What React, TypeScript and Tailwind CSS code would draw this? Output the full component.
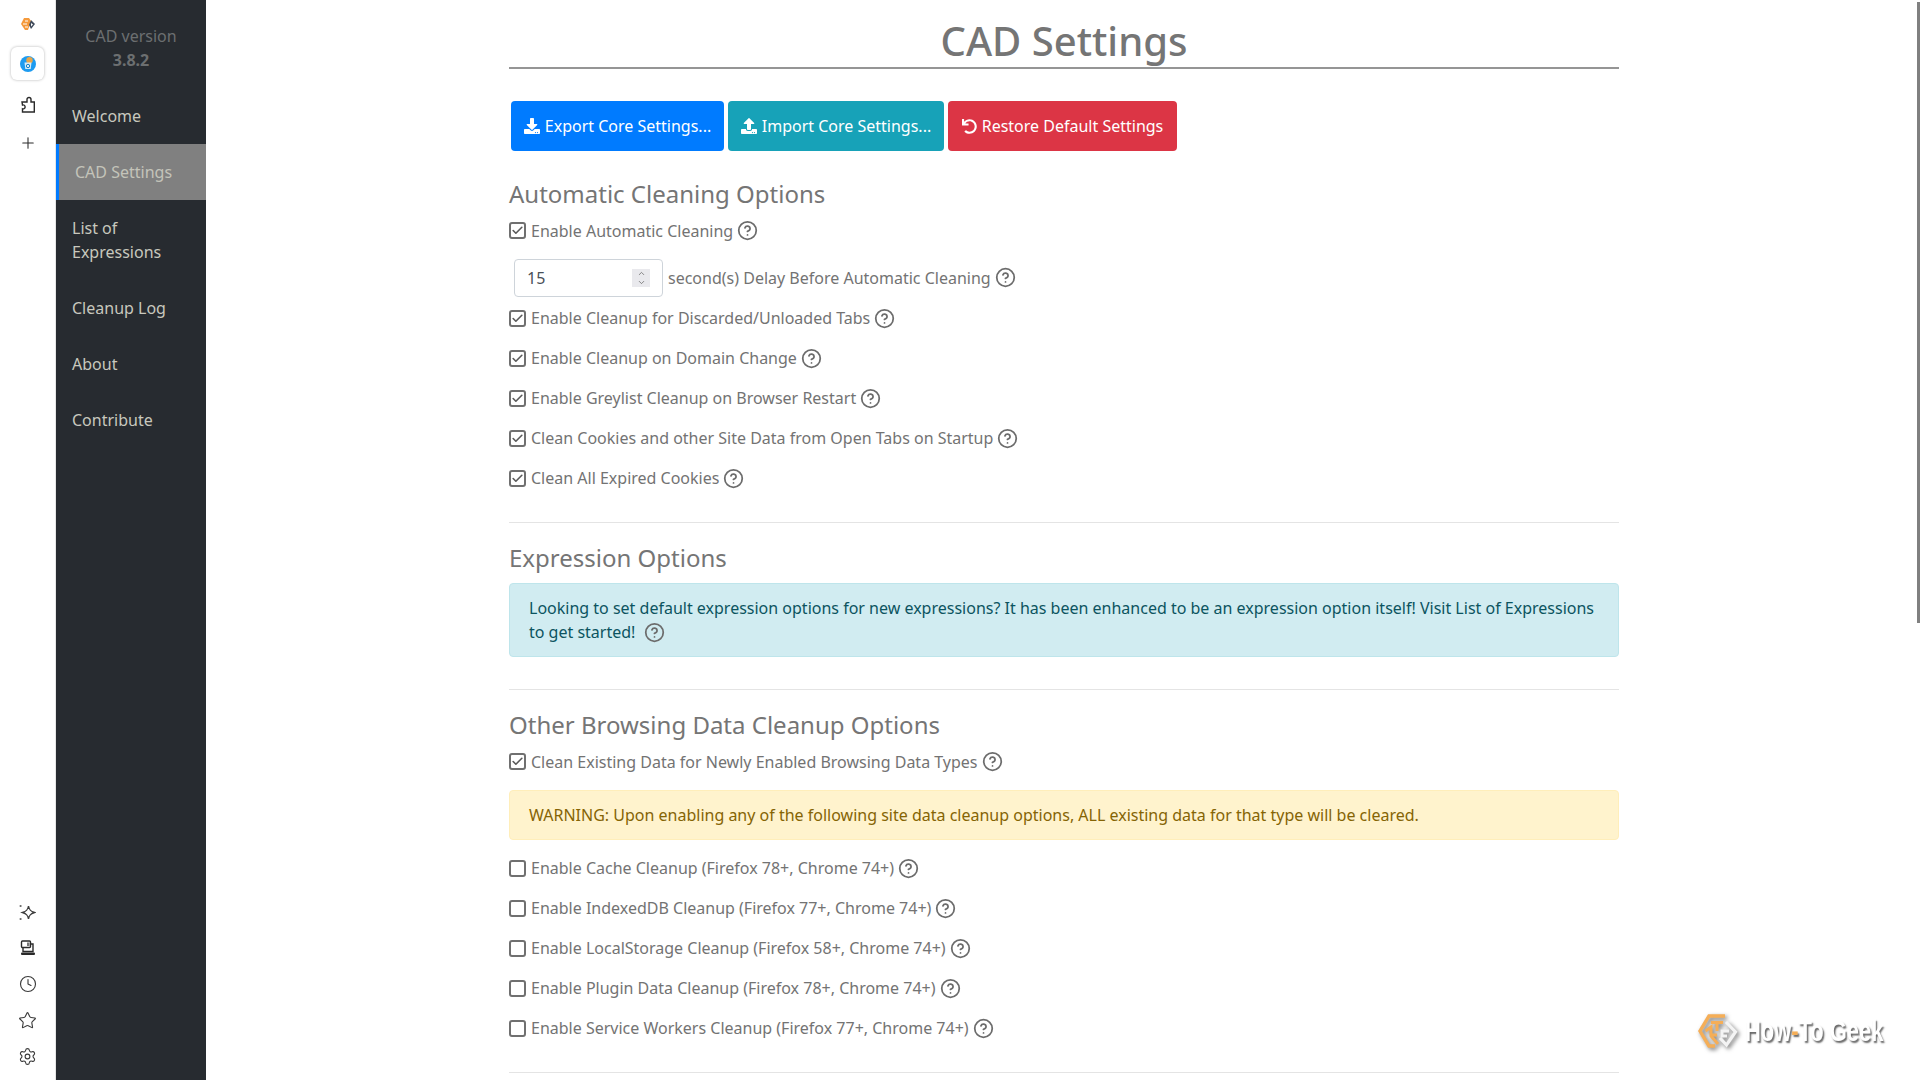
import React from "react";
import { Clock, Plus, Settings, Star, CircleHelp, Check, ChevronUp, ChevronDown } from "lucide-react";
import { FaDownload, FaUpload, FaUndo } from "react-icons/fa";

const font = { fontFamily: '"Noto Sans", sans-serif' };

function Help({ className = "ml-[4px]" }: { className?: string }) {
  return <CircleHelp className={`${className} w-[21px] h-[21px] text-[#6c6c6c] shrink-0`} strokeWidth={2} />;
}

function CheckRow({ label, checked, className = "h-[40px]" }: { label: string; checked?: boolean; className?: string }) {
  return (
    <div className={`flex items-center ${className}`}>
      <span className="w-[17px] h-[17px] border-2 border-[#707070] rounded-[3px] flex items-center justify-center shrink-0">
        {checked && <Check className="w-[13px] h-[13px] text-[#5a5a5a]" strokeWidth={3} />}
      </span>
      <span className="ml-[5px] text-[16px] text-[#737373]">{label}</span>
      <Help />
    </div>
  );
}

function Logo() {
  return (
    <svg width="40" height="34" viewBox="0 0 40 34" fill="none" className="drop-shadow-[2px_2px_2px_rgba(0,0,0,0.55)]">
      <path d="M27 2H11L2 17L11 32H17" stroke="#f5ae57" strokeWidth="3.4" />
      <path d="M13 8.5H25M19 8.5V17M7.5 17L13 13V22L20 30" stroke="#f5ae57" strokeWidth="3" />
      <path d="M13 21H19" stroke="#f5ae57" strokeWidth="3" />
      <path d="M28 8L37.5 18L28.5 31L22 24" stroke="#f4f4f4" strokeWidth="3.2" />
      <path d="M31 17H24V22H29" stroke="#f4f4f4" strokeWidth="2.8" />
    </svg>
  );
}

function SmallLogo() {
  return (
    <svg width="16" height="14" viewBox="0 0 16 14">
      <path d="M4 1H9L11 4L8 13H5L1 7Z" fill="#f59a3c" />
      <path d="M5 4H8M3 7H7M5 10H8" stroke="#fff" strokeWidth="1" />
      <path d="M11 3L15 7L11 12L9 8Z" fill="#3f4a5a" />
      <path d="M11 6L13 7.5L11 9.5Z" fill="#fff" />
    </svg>
  );
}

function CadIcon() {
  return (
    <svg width="16" height="16" viewBox="0 0 16 16">
      <circle cx="8" cy="8" r="8" fill="#1d9bf0" />
      <circle cx="9.5" cy="4.2" r="3.2" fill="#e8a64a" />
      <path d="M4.5 6.5H11.5L10.7 13H5.3Z" fill="#d9edf7" />
      <circle cx="8" cy="10" r="1.7" fill="none" stroke="#1783c9" strokeWidth="1" />
    </svg>
  );
}

function Slot({ children }: { children: React.ReactNode }) {
  return <div className="h-[36px] flex items-center justify-center">{children}</div>;
}

function Rail() {
  return (
    <aside className="w-[56px] shrink-0 flex flex-col items-center bg-white border-r border-[#e6e6e6] h-full">
      <div className="h-[47px] flex items-center justify-center"><SmallLogo /></div>
      <div className="w-[33px] h-[33px] rounded-[6px] bg-white shadow-[0_0_3px_rgba(0,0,0,0.3)] flex items-center justify-center"><CadIcon /></div>
      <svg width="16" height="17" viewBox="0 0 16 17" fill="none" stroke="#2a2a2a" strokeWidth="1.4" className="mt-[16px]">
        <path d="M2 6H7V3.5a2 2 0 1 1 4 0V6H14.3V16H2.5V12.8a2 2 0 1 0 0-3.8Z" />
      </svg>
      <Plus className="w-[18px] h-[18px] mt-[21px] text-[#2a2a2a]" strokeWidth={1.4} />
      <div className="flex-1" />
      <div className="flex flex-col pb-[6px]">
        <Slot>
          <svg width="17" height="17" viewBox="0 0 17 17" fill="none" stroke="#3b3b3b" strokeWidth="1.4">
            <path d="M9.5 2C10.1 5.8 11.3 7.2 15.5 8.5C11.3 9.8 10.1 11.2 9.5 15C8.9 11.2 7.7 9.8 3.5 8.5C7.7 7.2 8.9 5.8 9.5 2Z" />
            <circle cx="1.6" cy="2" r="1.1" fill="#666" stroke="none" />
            <circle cx="1.6" cy="15" r="1.1" fill="#666" stroke="none" />
          </svg>
        </Slot>
        <Slot>
          <svg width="16" height="16" viewBox="0 0 16 16" fill="none" stroke="#2a2a2a" strokeWidth="1.4">
            <rect x="1.5" y="1" width="9" height="6.5" rx="1" />
            <rect x="7" y="2.5" width="2.5" height="3.5" fill="#777" stroke="none" />
            <path d="M3 8v3.5h10V4h-2" />
            <rect x="1" y="12.5" width="14" height="2.5" rx="1" fill="#2a2a2a" stroke="none" />
          </svg>
        </Slot>
        <Slot><Clock className="w-[18px] h-[18px] text-[#3b3b3b]" strokeWidth={1.5} /></Slot>
        <Slot><Star className="w-[19px] h-[19px] text-[#3b3b3b]" strokeWidth={1.4} /></Slot>
        <Slot><Settings className="w-[19px] h-[19px] text-[#3b3b3b]" strokeWidth={1.4} /></Slot>
      </div>
    </aside>
  );
}

function NavItem({ children, active }: { children: React.ReactNode; active?: boolean }) {
  if (active) {
    return <div className="h-[56px] flex items-center pl-[16px] border-l-[3px] border-[#007bff] bg-[#808080] text-[#c4c4ba] text-[16px]">{children}</div>;
  }
  return <div className="px-[16px] py-[16px] text-[#c8c8be] text-[16px] leading-[24px]">{children}</div>;
}

function Nav() {
  return (
    <nav className="w-[150px] shrink-0 bg-[#272b30] h-full flex flex-col">
      <div className="h-[88px] pt-[24px] text-center text-[16px] leading-[24px] text-[#6c6f70]">
        <div>CAD version</div>
        <div className="font-bold">3.8.2</div>
      </div>
      <NavItem>Welcome</NavItem>
      <NavItem active>CAD Settings</NavItem>
      <NavItem>List of Expressions</NavItem>
      <NavItem>Cleanup Log</NavItem>
      <NavItem>About</NavItem>
      <NavItem>Contribute</NavItem>
    </nav>
  );
}

function Btn({ color, icon, label, width }: { color: string; icon: React.ReactNode; label: string; width: string }) {
  return (
    <div className={`${color} ${width} h-[50px] rounded-[4px] text-white text-[16px] flex items-center justify-center gap-[5px]`}>
      {icon}
      <span>{label}</span>
    </div>
  );
}

function Section({ children }: { children: React.ReactNode }) {
  return <h4 className="text-[24px] leading-[29px] text-[#757575]">{children}</h4>;
}

function Divider({ className }: { className: string }) {
  return <hr className={`border-0 border-t border-[#e4e4e4] ${className}`} />;
}

export default function App() {
  return (
    <div style={font} className="flex w-[1920px] h-[1080px] overflow-hidden bg-white relative">
      <Rail />
      <Nav />
      <main className="flex-1 pl-[303px] pr-[298px] text-[#737373] min-w-0">
        <div className="w-[1110px]">
          <h1 className="text-[40px] leading-[48px] text-center text-[#757575] font-medium h-[69px] pt-[17px] border-b-2 border-[#959595]">CAD Settings</h1>
          <div className="flex gap-[4px] pl-[2px] mt-[32px]">
            <Btn color="bg-[#007bff]" width="w-[213px]" label="Export Core Settings..." icon={<FaDownload className="w-[16px] h-[16px]" />} />
            <Btn color="bg-[#17a2b8]" width="w-[216px]" label="Import Core Settings..." icon={<FaUpload className="w-[16px] h-[16px]" />} />
            <Btn color="bg-[#dc3545]" width="w-[229px]" label="Restore Default Settings" icon={<FaUndo className="w-[15px] h-[15px]" />} />
          </div>
          <div className="mt-[28px]"><Section>Automatic Cleaning Options</Section></div>
          <CheckRow checked label="Enable Automatic Cleaning" className="h-[45px]" />
          <div className="flex items-center h-[41px] ml-[5px] mt-[4px]">
            <div className="w-[149px] h-[38px] border border-[#ced4da] rounded-[4px] flex items-center pl-[12px] pr-[12px] text-[16px] text-[#495057]">
              <span className="flex-1">15</span>
              <span className="w-[18px] h-[18px] bg-[#e9e9ed] flex flex-col items-center justify-center">
                <ChevronUp className="w-[11px] h-[9px] text-[#666]" />
                <ChevronDown className="w-[11px] h-[9px] text-[#666]" />
              </span>
            </div>
            <span className="ml-[5px] text-[16px]">second(s) Delay Before Automatic Cleaning</span>
            <Help />
          </div>
          <CheckRow checked label="Enable Cleanup for Discarded/Unloaded Tabs" />
          <CheckRow checked label="Enable Cleanup on Domain Change" />
          <CheckRow checked label="Enable Greylist Cleanup on Browser Restart" />
          <CheckRow checked label="Clean Cookies and other Site Data from Open Tabs on Startup" />
          <CheckRow checked label="Clean All Expired Cookies" />
          <Divider className="mt-[24px] mb-[20px]" />
          <Section>Expression Options</Section>
          <div className="mt-[11px] h-[74px] border border-[#bee5eb] bg-[#d1ecf1] rounded-[4px] px-[19px] pt-[12px] text-[16px] leading-[24px] text-[#0c5460]">
            <div>Looking to set default expression options for new expressions? It has been enhanced to be an expression option itself! Visit List of Expressions</div>
            <div className="flex items-center">to get started!<Help className="ml-[9px]" /></div>
          </div>
          <Divider className="mt-[32px] mb-[20px]" />
          <Section>Other Browsing Data Cleanup Options</Section>
          <CheckRow checked label="Clean Existing Data for Newly Enabled Browsing Data Types" className="h-[45px]" />
          <div className="mt-[6px] h-[50px] border border-[#ffeeba] bg-[#fff3cd] rounded-[4px] px-[19px] flex items-center text-[16px] text-[#856404]">
            WARNING: Upon enabling any of the following site data cleanup options, ALL existing data for that type will be cleared.
          </div>
          <div className="mt-[8px]">
            <CheckRow label="Enable Cache Cleanup (Firefox 78+, Chrome 74+)" />
            <CheckRow label="Enable IndexedDB Cleanup (Firefox 77+, Chrome 74+)" />
            <CheckRow label="Enable LocalStorage Cleanup (Firefox 58+, Chrome 74+)" />
            <CheckRow label="Enable Plugin Data Cleanup (Firefox 78+, Chrome 74+)" />
            <CheckRow label="Enable Service Workers Cleanup (Firefox 77+, Chrome 74+)" />
          </div>
          <Divider className="mt-[24px]" />
        </div>
      </main>
      <div className="absolute right-0 top-[2px] w-[3px] h-[621px] bg-[#808080]" />
      <div className="absolute left-[1698px] top-[1014px] flex items-center gap-[7px]">
        <Logo />
        <span className="inline-block origin-left scale-x-[0.73] text-[30px] leading-[34px] font-bold text-white whitespace-nowrap [text-shadow:2px_2px_2px_rgba(0,0,0,0.6)]" style={{ fontFamily: '"Liberation Sans", sans-serif' }}>How<span className="text-[#f5ae57]">-</span>To Geek</span>
      </div>
    </div>
  );
}
